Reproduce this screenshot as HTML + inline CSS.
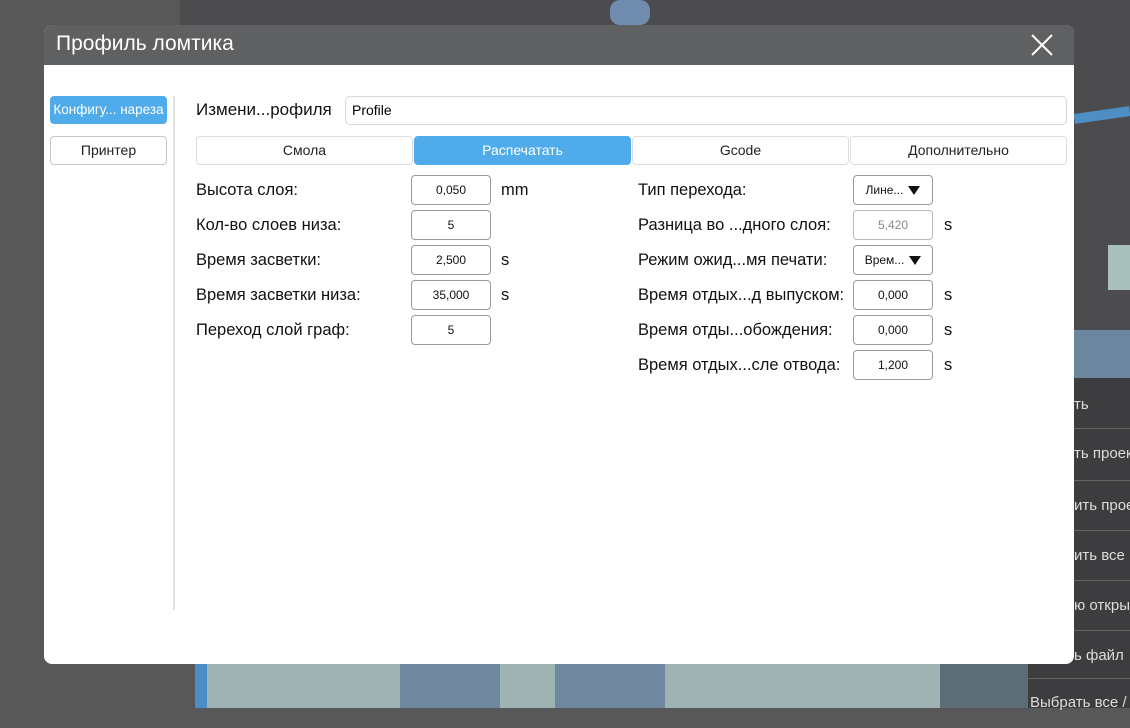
<!DOCTYPE html>
<html><head><meta charset="utf-8"><style>
*{box-sizing:border-box;margin:0;padding:0}
body{width:1130px;height:708px;overflow:hidden;position:relative;background:#585858;font-family:"Liberation Sans","DejaVu Sans",sans-serif}
.abs{position:absolute}
.dlg{left:44px;top:25px;width:1030px;height:639px;background:#fff;border-radius:8px;overflow:hidden}
.tb{left:0;top:0;width:1030px;height:40px;background:#5f6062}
.title{left:12px;top:7px;color:#fff;font-size:21px}
.btn{position:absolute;border:1px solid #c8c8c8;border-radius:4px;background:#fff;font-size:14px;text-align:center;line-height:26px;color:#222}
.blue{background:#4fabea;border-color:#4fabea;color:#fff}
.lbl{position:absolute;font-size:16.5px;color:#111}
.inp{position:absolute;border:1px solid #9a9a9a;border-radius:4px;height:30px;width:80px;font-size:12px;text-align:center;line-height:28px;color:#111;background:#fff}
.u{position:absolute;font-size:16.5px;color:#111}
.tri{display:inline-block;width:0;height:0;border-left:6px solid transparent;border-right:6px solid transparent;border-top:9px solid #111;margin-left:5px;vertical-align:-1px}
.mi{position:absolute;left:1028px;width:102px;height:50px;border-top:1px solid #666;color:#ddd;font-size:15px;line-height:50px;white-space:nowrap;overflow:hidden;padding-left:46px}
</style></head><body>
<div class="abs" style="left:180px;top:0;width:950px;height:380px;background:#4c4c4e"></div>
<div class="abs" style="left:1074px;top:110px;width:56px;height:10px;background:#4d8fc4;transform:rotate(-8deg)"></div>
<div class="abs" style="left:1108px;top:245px;width:22px;height:45px;background:#a9c0bb"></div>
<div class="abs" style="left:1074px;top:330px;width:56px;height:48px;background:#6d86a0"></div>
<div class="abs" style="left:1028px;top:378px;width:102px;height:330px;background:#3d3d3f"></div>
<div class="abs" style="left:195px;top:664px;width:830px;height:44px;background:#9fb3b2"></div>
<div class="abs" style="left:195px;top:664px;width:12px;height:44px;background:#4b8dc6"></div>
<div class="abs" style="left:400px;top:664px;width:100px;height:44px;background:#6f88a0"></div>
<div class="abs" style="left:555px;top:664px;width:110px;height:44px;background:#6f88a0"></div>
<div class="abs" style="left:940px;top:664px;width:88px;height:44px;background:#5d6d75"></div>
<div class="abs" style="left:610px;top:0;width:40px;height:25px;background:#6f8cae;border-radius:10px"></div>
<div class="mi" style="top:380px;border-top:none">ть</div>
<div class="mi" style="top:428px">ть проект</div>
<div class="mi" style="top:480px">ить прое</div>
<div class="mi" style="top:530px">ить все к</div>
<div class="mi" style="top:580px">ю открыт</div>
<div class="mi" style="top:630px">ь файл</div>
<div class="mi" style="top:678px;padding-left:2px;line-height:48px">Выбрать все / С</div>

<div class="abs dlg">
 <div class="abs tb"></div>
 <div class="abs title">Профиль ломтика</div>
 <svg class="abs" style="left:987px;top:9px" width="22" height="22"><path d="M1 1L21 21M21 1L1 21" stroke="#fff" stroke-width="2"/></svg>
</div>
<div class="btn blue" style="left:50px;top:96px;width:117px;height:28px;font-size:13.5px">Конфигу... нареза</div>
<div class="btn" style="left:50px;top:136px;width:117px;height:29px">Принтер</div>
<div class="abs" style="left:173px;top:96px;width:2px;height:514px;background:#e2e2e2"></div>

<div class="lbl" style="left:196px;top:100px;font-size:17px">Измени...рофиля</div>
<div class="abs" style="left:345px;top:96px;width:722px;height:29px;border:1px solid #d8d8d8;border-radius:5px;font-size:14px;line-height:27px;padding-left:6px">Profile</div>

<div class="btn" style="left:196px;top:136px;width:217px;height:29px;border-color:#ddd">Смола</div>
<div class="btn blue" style="left:414px;top:136px;width:217px;height:29px">Распечатать</div>
<div class="btn" style="left:632px;top:136px;width:217px;height:29px;border-color:#ddd">Gcode</div>
<div class="btn" style="left:850px;top:136px;width:217px;height:29px;border-color:#ddd">Дополнительно</div>

<div class="lbl" style="left:196px;top:181px">Высота слоя:</div>
<div class="inp" style="left:411px;top:175px">0,050</div><div class="u" style="left:501px;top:181px">mm</div>
<div class="lbl" style="left:196px;top:216px">Кол-во слоев низа:</div>
<div class="inp" style="left:411px;top:210px">5</div>
<div class="lbl" style="left:196px;top:251px">Время засветки:</div>
<div class="inp" style="left:411px;top:245px">2,500</div><div class="u" style="left:501px;top:251px">s</div>
<div class="lbl" style="left:196px;top:286px">Время засветки низа:</div>
<div class="inp" style="left:411px;top:280px">35,000</div><div class="u" style="left:501px;top:286px">s</div>
<div class="lbl" style="left:196px;top:321px">Переход слой граф:</div>
<div class="inp" style="left:411px;top:315px">5</div>

<div class="lbl" style="left:638px;top:181px">Тип перехода:</div>
<div class="inp" style="left:853px;top:175px">Лине...<span class="tri"></span></div>
<div class="lbl" style="left:638px;top:216px">Разница во ...дного слоя:</div>
<div class="inp" style="left:853px;top:210px;border-color:#bbb;color:#888">5,420</div><div class="u" style="left:944px;top:216px">s</div>
<div class="lbl" style="left:638px;top:251px">Режим ожид...мя печати:</div>
<div class="inp" style="left:853px;top:245px">Врем...<span class="tri"></span></div>
<div class="lbl" style="left:638px;top:286px">Время отдых...д выпуском:</div>
<div class="inp" style="left:853px;top:280px">0,000</div><div class="u" style="left:944px;top:286px">s</div>
<div class="lbl" style="left:638px;top:321px">Время отды...обождения:</div>
<div class="inp" style="left:853px;top:315px">0,000</div><div class="u" style="left:944px;top:321px">s</div>
<div class="lbl" style="left:638px;top:356px">Время отдых...сле отвода:</div>
<div class="inp" style="left:853px;top:350px">1,200</div><div class="u" style="left:944px;top:356px">s</div>
</body></html>
